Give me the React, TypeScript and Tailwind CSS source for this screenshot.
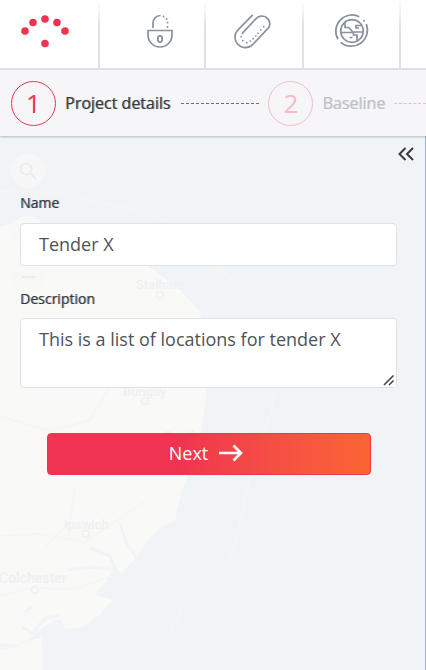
import { useState } from "react";

const tabs = [
  { name: "Overview", width: "w-[100px]", icon: <LogoIcon /> },
  { name: "Access", width: "w-[106px]", icon: <LockIcon /> },
  { name: "Attachments", width: "w-[98px]", icon: <ClipIcon /> },
  { name: "Locations", width: "w-[97px]", icon: <GlobeIcon /> },
];

function LogoIcon() {
  return (
    <svg width="50" height="34" viewBox="0 0 50 34" fill="#f03350" className="-ml-2">
      <circle cx="5" cy="17" r="3.8" />
      <circle cx="13" cy="8.5" r="3.8" />
      <circle cx="25" cy="5" r="3.8" />
      <circle cx="37" cy="8.5" r="3.8" />
      <circle cx="45" cy="17" r="3.8" />
      <circle cx="25" cy="29.500" r="3.8" />
    </svg>
  );
}

function LockIcon() {
  return (
    <svg width="36" height="36" viewBox="0 0 36 36" fill="none" stroke="#87929c" strokeWidth="1.7" className="ml-4">
      <path d="M6 17.500h24v4.500a12 12 0 0 1-24 0z" />
      <path d="M11 15v-4.500a7.500 7.500 0 0 1 7.500-8" />
      <path d="M21.500 3.500l.1 0M24.500 6l.1 0M25.500 9.500l.1 0M25.500 14l.1 0" strokeWidth="1.800" strokeLinecap="round" />
      <ellipse cx="18" cy="26" rx="2.200" ry="3.200" strokeWidth="1.800" />
    </svg>
  );
}

function ClipIcon() {
  return (
    <svg
      width="36" height="36" viewBox="0 0 36 36" fill="none" className="overflow-visible"
      stroke="#87929c" strokeWidth="1.7" strokeLinecap="round"
    >
      <path d="M16.300 2.300L2.500 16.300A10.450 10.450 0 0 0 16.300 32L33 14.300A7.900 7.900 0 0 0 20.300 5.300L6.300 20.300" />
      <path d="M5 23.700l.1 0M6.700 27.700l.1 0M10.700 29.700l.1 0M14.300 28l.1 0M17 25.700l.1 0M19.700 23l.1 0M22 20.300l.1 0M24.700 17l.1 0M27.700 13.700l.1 0" />
    </svg>
  );
}

function GlobeIcon() {
  return (
    <svg width="36" height="36" viewBox="0 0 36 36" fill="none" stroke="#87929c" strokeWidth="1.7">
      <circle cx="18" cy="18" r="11.300" />
      <path d="M25.300 3.700A16.200 16.200 0 0 0 4 26.300M6.700 29.300A16.200 16.200 0 0 0 32.300 11" />
      <path d="M30 7.700l.1 0" strokeWidth="2" strokeLinecap="round" />
      <path d="M11 10v4.500h3.500L18 18v1.500H7M28 12.500h-6v2.500h3M29 19H19.500v3H23v6M15.500 24.500h3" />
    </svg>
  );
}

function ArrowIcon() {
  return (
    <svg width="24" height="18" viewBox="0 0 24 18" fill="none" stroke="currentColor" strokeWidth="2.6">
      <path d="M0 9h22M14.500 1.500L22 9l-7.500 7.500" />
    </svg>
  );
}

function MapBackground() {
  return (
    <svg
      className="absolute inset-0 h-full w-full"
      viewBox="0 0 425 534"
      preserveAspectRatio="xMinYMin slice"
      fill="none"
      aria-hidden="true"
    >
      <path
        d="M0 91L14 87L60 88L110 103L152 133L180 154L199 174L208 205L207 254L203 284L197 320L182 354L175 384L162 391L150 401L137 421L122 437L115 432L107 444L95 459L112 464L100 479L83 491L65 493L60 482L43 491L32 501L20 509L0 507Z"
        fill="#f9f9f7"
      />
      <path d="M0 514L14 512L30 504L42 502L43 534H0Z" fill="#f9f9f7" />
      {/* rivers */}
      <g stroke="#f0f4f7" strokeWidth="3" strokeLinejoin="round">
        <path d="M120 388L127 408L137 422" strokeWidth="2" />
        <path d="M90 412L110 420L116 434L90 431L68 434" />
        <path d="M25 476L32 471M22 491L33 497L45 482L60 480" />
      </g>
      {/* roads and borders */}
      <g stroke="#f7f5f3" strokeWidth="1.5">
        <path d="M0 55L60 57L100 67L145 76C180 90 190 108 215 128C250 160 265 190 272 218C280 250 273 282 255 318C247 345 244 385 230 420C220 440 190 450 180 475C172 500 155 522 139 534" />
        <path d="M0 280L50 295L90 284L110 250M0 400L40 398L85 406L120 382L145 365M0 460L30 452L75 453L112 440M45 412L70 385L75 354" />
      </g>
      <circle cx="28" cy="35" r="17" fill="#f7f7f7" />
      <circle cx="28" cy="97" r="17" fill="#f8f8f7" />
      <circle cx="28" cy="141" r="17" fill="#f8f8f7" />
      <g stroke="#ededed" strokeWidth="2">
        <circle cx="26" cy="33" r="5.500" />
        <path d="M30 37L36 43M22 141H35" />
      </g>
      <g fill="#f0f0f1" fontFamily="Roboto, sans-serif" fontSize="13" fontWeight="500">
        <text x="136" y="153">Stalham</text>
        <text x="123" y="260">Bungay</text>
        <text x="164" y="304">Southwold</text>
        <text x="64" y="393">Ipswich</text>
        <text x="-1" y="447" fontSize="14">Colchester</text>
      </g>
      <g stroke="#f0f0f1" strokeWidth="1.500">
        <circle cx="160" cy="159" r="3.500" />
        <circle cx="145" cy="265" r="3.500" />
        <circle cx="86" cy="398" r="3.500" />
        <circle cx="35" cy="454" r="3.500" />
      </g>
    </svg>
  );
}

export default function App() {
  const [name, setName] = useState("Tender X");
  const [description, setDescription] = useState("This is a list of locations for tender X");

  return (
    <div className="flex min-h-screen flex-col overflow-hidden bg-[#f6f6f9] font-['Open_Sans',sans-serif] text-[#343a40]">
      <nav className="flex h-[70px] border-b-2 border-[#dee1e6] bg-white">
        {tabs.map((tab) => (
          <div key={tab.name} className={`flex shrink-0 ${tab.width}`}>
            <button type="button" aria-label={tab.name} className="flex flex-1 items-center justify-center pb-1.5">
              {tab.icon}
            </button>
            <span className="w-0.5 bg-linear-to-b from-white to-[#dee1e6] to-40%" />
          </div>
        ))}
      </nav>

      {/* Steps */}
      <ol className="relative z-10 flex h-[66px] items-center bg-[#f6f6f9] pl-[11px] shadow-[0_1px_2px_rgba(0,0,0,0.25)]">
        <li className="flex shrink-0 items-center">
          <span className="flex size-[45px] items-center justify-center rounded-full border border-[#f03350] text-[26px] text-[#f03350]">
            1
          </span>
          <span className="ml-[9px] text-base [text-shadow:1px_0_0_#343a4080]">Project details</span>
        </li>
        <li aria-hidden="true" className="mr-[9px] ml-[11px] w-[78px] shrink-0 border-t border-dashed border-[#f03350]" />
        <li className="flex shrink-0 items-center">
          <span className="flex size-[45px] items-center justify-center rounded-full border border-[#f7bac7] text-[26px] text-[#f7bac7]">
            2
          </span>
          <span className="ml-[9px] text-base text-[#bfc0c3] [text-shadow:1px_0_0_#bfc0c380]">Baseline</span>
        </li>
        <li aria-hidden="true" className="ml-[9px] flex-1 border-t border-dashed border-[#f7bac7]" />
      </ol>

      <main className="relative flex-1 border-r border-[#9bb8cb] bg-[#f0f4f7]">
        <MapBackground />
        <div className="relative flex flex-col pr-7 pl-5">
          <button type="button" aria-label="Collapse panel" className="mt-[9px] -mr-[17px] self-end">
            <svg width="16" height="18" viewBox="0 0 16 18" fill="none" stroke="currentColor" strokeWidth="2">
              <path d="M7.500 3L1.500 9l6 6M15 3L9 9l6 6" />
            </svg>
          </button>

          <form className="flex flex-col" onSubmit={(e) => e.preventDefault()}>
            <label htmlFor="name" className="mt-[30px] text-sm leading-5 [text-shadow:1px_0_0_#343a4080]">
              Name
            </label>
            <input
              id="name"
              value={name}
              onChange={(e) => setName(e.target.value)}
              className="mt-[10px] h-[43px] rounded border border-[#dee1e6] bg-white px-[18px] pb-0.5 text-lg text-[#4f5357]"
            />
            <label htmlFor="description" className="mt-[23px] text-sm leading-5 [text-shadow:1px_0_0_#343a4080]">
              Description
            </label>
            <div className="relative mt-[9px] flex">
              <textarea
                id="description"
                value={description}
                onChange={(e) => setDescription(e.target.value)}
                className="h-[70px] flex-1 resize-y rounded border border-[#dee1e6] bg-white px-[18px] py-1.5 text-lg text-[#4f5357]"
              />
              <svg
                width="14" height="14" viewBox="0 0 14 14" fill="none"
                className="pointer-events-none absolute right-px bottom-px bg-white"
                stroke="#44484c" strokeWidth="1.6"
              >
                <path d="M2 12L11.500 2.500M7 12L11.500 7.500" />
              </svg>
            </div>
            <button
              type="submit"
              className="mt-[45px] mr-[26px] ml-[27px] flex h-[42px] items-center justify-center gap-[11px] rounded border border-[#f03350] bg-linear-to-r from-[#f03350] from-40% to-[#fa6432] pr-1.5 pb-0.5 text-lg text-white"
            >
              Next
              <ArrowIcon />
            </button>
          </form>
        </div>
      </main>
    </div>
  );
}
